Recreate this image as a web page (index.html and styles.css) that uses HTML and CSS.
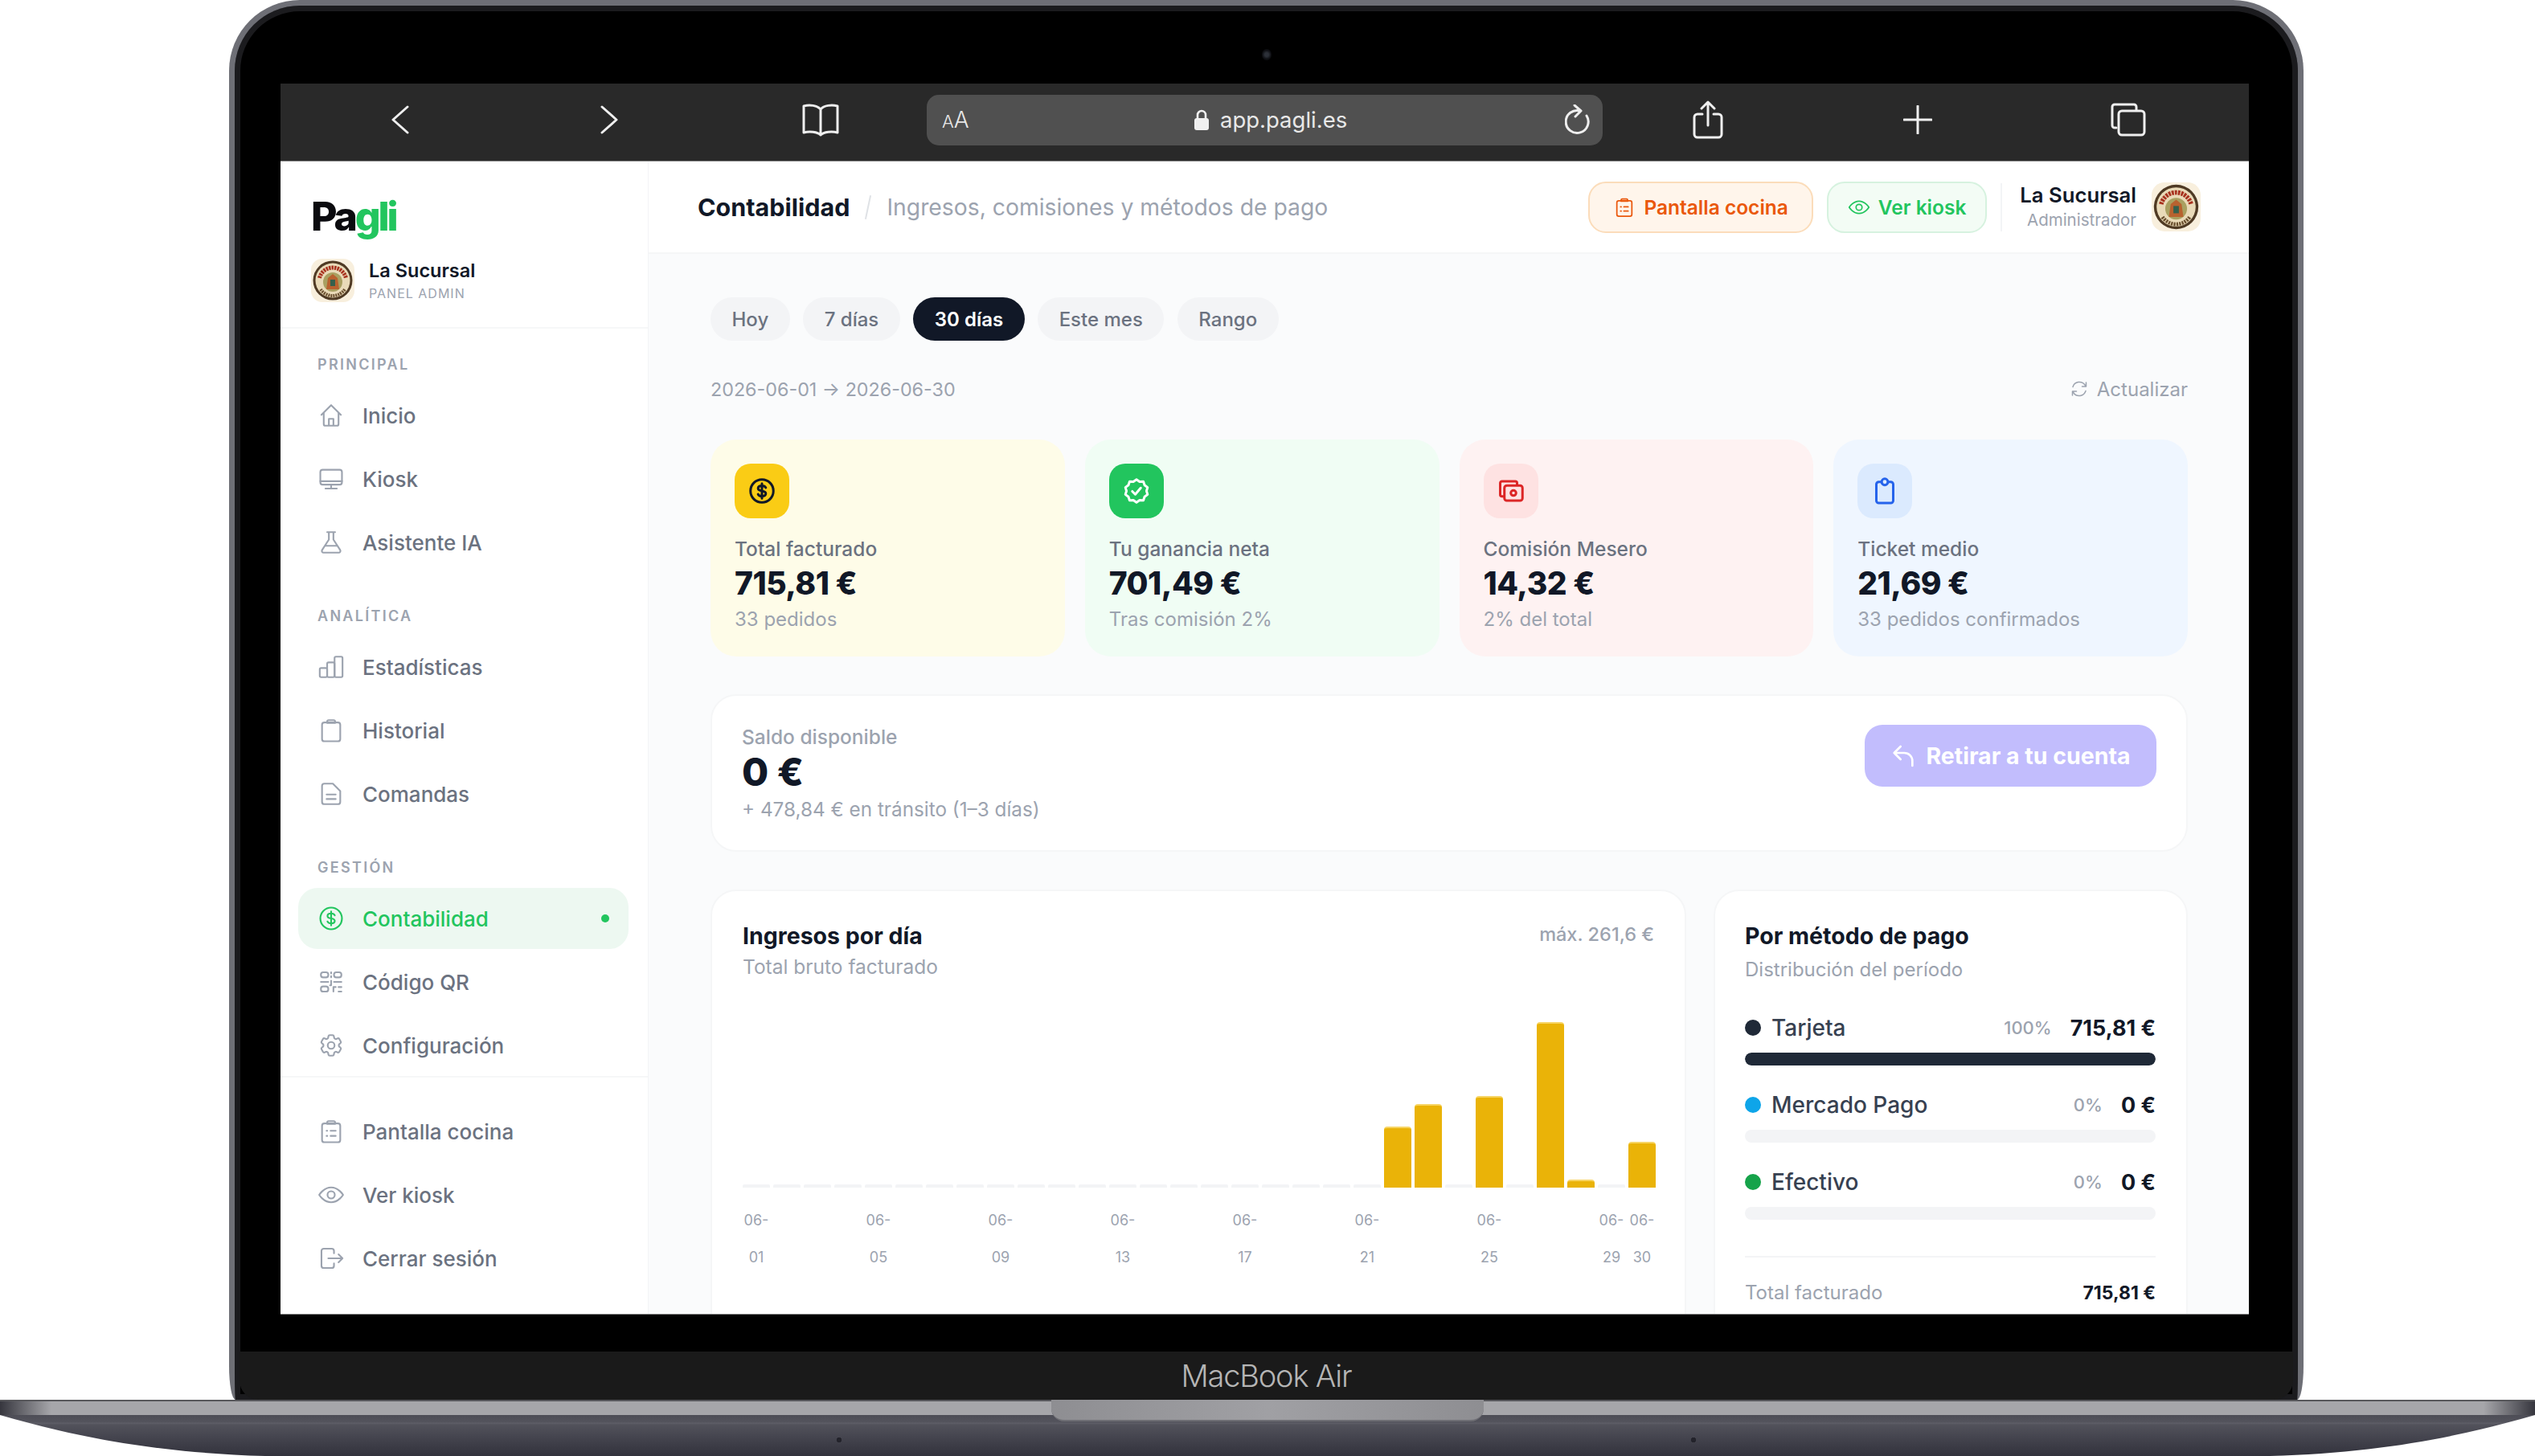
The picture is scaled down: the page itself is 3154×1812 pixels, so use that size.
FILE: index.html
```html
<!DOCTYPE html>
<html lang="es">
<head>
    <meta charset="UTF-8">
    <title>Pagli - Contabilidad</title>
    <link rel="stylesheet" href="styles.css">
</head>
<body>
    <svg class="defs" width="0" height="0">
        <symbol id="i-home" viewBox="0 0 24 24"><path d="M3.5 11.5 12 3l8.500 8.500M5.500 9.500V19.500a1.500 1.500 0 0 0 1.500 1.500h10a1.500 1.500 0 0 0 1.500-1.500V9.500M10 21v-6h4v6"/></symbol>
        <symbol id="i-kiosk" viewBox="0 0 24 24"><rect x="2.500" y="4" width="19" height="13" rx="2"/><path d="M2.500 14h19M12 17v3.500M7 20.500h10"/></symbol>
        <symbol id="i-beaker" viewBox="0 0 24 24"><path d="M8.500 3h7M10 3v6.500L4 18.800A1.500 1.500 0 0 0 5.300 21h13.400a1.500 1.500 0 0 0 1.300-2.200L14 9.500V3M7 15h10"/></symbol>
        <symbol id="i-chart" viewBox="0 0 24 24"><rect x="2" y="13" width="6.500" height="8" rx="1.200"/><rect x="8.500" y="8" width="6.500" height="13" rx="1.200"/><rect x="15" y="3" width="7" height="18" rx="1.200"/></symbol>
        <symbol id="i-clip" viewBox="0 0 24 24"><rect x="4" y="5" width="16" height="16.500" rx="2"/><path d="M8.500 5.500V4.300A1.300 1.300 0 0 1 9.800 3h4.400a1.300 1.300 0 0 1 1.300 1.300v1.200z"/></symbol>
        <symbol id="i-doc" viewBox="0 0 24 24"><path d="M6 3h7.500L20 9.500V19a2 2 0 0 1-2 2H6a2 2 0 0 1-2-2V5a2 2 0 0 1 2-2zM8 12.500h8M8 16.500h8"/></symbol>
        <symbol id="i-dollar" viewBox="0 0 24 24"><circle cx="12" cy="12" r="9.500"/><path d="M15.200 9.300c-.5-1.100-1.700-1.700-3.200-1.700-1.900 0-3.200.9-3.200 2.200s1.300 1.900 3.200 2.200 3.200.9 3.200 2.200-1.300 2.200-3.200 2.200c-1.500 0-2.700-.6-3.200-1.700M12 5.800v12.400"/></symbol>
        <symbol id="i-qr" viewBox="0 0 24 24"><rect x="3" y="3.500" width="6.500" height="4.500" rx="2"/><rect x="14.500" y="3.500" width="6.500" height="4.500" rx="2"/><rect x="3" y="16" width="6.500" height="4.500" rx="2"/><path d="M12 3.500v1M12 7v1M3 12h6.500M12 11v4h-1M14.500 12H21M14 20.500v-4h2M18.500 16.500H21M18.500 20.500H21"/></symbol>
        <symbol id="i-cog" viewBox="0 0 24 24"><path d="M9.594 3.940c.09-.542.56-.94 1.110-.94h2.593c.55 0 1.020.398 1.110.94l.213 1.281c.063.374.313.686.645.870.074.04.147.083.22.127.325.196.72.257 1.075.124l1.217-.456a1.125 1.125 0 0 1 1.370.490l1.296 2.247a1.125 1.125 0 0 1-.26 1.431l-1.003.827c-.293.241-.438.613-.43.992a7.723 7.723 0 0 1 0 .255c-.008.378.137.75.43.991l1.004.827c.424.35.534.955.26 1.430l-1.298 2.247a1.125 1.125 0 0 1-1.369.491l-1.217-.456c-.355-.133-.75-.072-1.076.124a6.470 6.470 0 0 1-.22.128c-.331.183-.581.495-.644.869l-.213 1.281c-.09.543-.56.94-1.110.94h-2.594c-.55 0-1.019-.398-1.110-.94l-.213-1.281c-.062-.374-.312-.686-.644-.87a6.520 6.520 0 0 1-.22-.127c-.325-.196-.72-.257-1.076-.124l-1.217.456a1.125 1.125 0 0 1-1.369-.49l-1.297-2.247a1.125 1.125 0 0 1 .26-1.431l1.004-.827c.292-.24.437-.613.43-.991a6.932 6.932 0 0 1 0-.255c.007-.38-.138-.751-.43-.992l-1.004-.827a1.125 1.125 0 0 1-.26-1.430l1.297-2.247a1.125 1.125 0 0 1 1.370-.491l1.216.456c.356.133.751.072 1.076-.124.072-.044.146-.086.22-.128.332-.183.582-.495.644-.869z"/><circle cx="12" cy="12" r="3"/></symbol>
        <symbol id="i-list" viewBox="0 0 24 24"><rect x="4" y="5" width="16" height="16.500" rx="2"/><path d="M8.500 5.500V4.300A1.300 1.300 0 0 1 9.800 3h4.400a1.300 1.300 0 0 1 1.300 1.300v1.200zM8 11.500h.6M8 16h.6M11.500 11.500H16M11.500 16H16"/></symbol>
        <symbol id="i-eye" viewBox="0 0 24 24"><path d="M1.500 12S5.500 5.500 12 5.500 22.500 12 22.500 12 18.500 18.500 12 18.500 1.500 12 1.500 12z"/><circle cx="12" cy="12" r="3.200"/></symbol>
        <symbol id="i-logout" viewBox="0 0 24 24"><path d="M14.500 7.500V5.500a2 2 0 0 0-2-2H5.500a2 2 0 0 0-2 2v13a2 2 0 0 0 2 2h7a2 2 0 0 0 2-2v-2M9.500 12h12.500M18.500 8.500 22 12l-3.500 3.500"/></symbol>
        <symbol id="i-refresh" viewBox="0 0 24 24"><path d="M4 9.500A8.500 8.500 0 0 1 19 7l1.500 2M20 14.500A8.500 8.500 0 0 1 5 17l-1.500-2M20.500 4v5h-5M3.500 20v-5h5"/></symbol>
        <symbol id="i-reply" viewBox="0 0 24 24"><path d="M9.500 15 3.500 9l6-6M3.500 9h9.500a7.500 7.500 0 0 1 7.500 7.500V21"/></symbol>
        <symbol id="i-badge" viewBox="0 0 24 24"><path d="M12 2.500l2.600 1.800 3.100-.1 1 3 2.500 1.900-.9 2.900.9 2.900-2.500 1.900-1 3-3.100-.1L12 21.500l-2.600-1.800-3.100.1-1-3-2.500-1.900.9-2.900-.9-2.900 2.500-1.900 1-3 3.100.1z"/><path d="M8.500 12.300l2.500 2.500 4.500-5.300"/></symbol>
        <symbol id="i-notes" viewBox="0 0 24 24"><path d="M6 16.500H4.500a1.500 1.500 0 0 1-1.500-1.500V5.500A1.500 1.500 0 0 1 4.500 4h11A1.500 1.500 0 0 1 17 5.500V7"/><rect x="6.500" y="7.500" width="15" height="12.500" rx="2"/><circle cx="14" cy="13.700" r="2.200"/></symbol>
        <symbol id="i-tag" viewBox="0 0 24 24"><rect x="5" y="4.500" width="14" height="17.500" rx="2"/><circle cx="12" cy="4.500" r="2.600" class="tag-hole"/></symbol>
        <symbol id="i-avatar" viewBox="0 0 54 54">
            <rect width="54" height="54" rx="14" fill="#f8efdd"/>
            <circle cx="27" cy="27" r="24.500" fill="#4f3a24"/>
            <circle cx="27" cy="27" r="21.500" fill="#e9dab8"/>
            <path d="M10.500 24a17 17 0 0 1 33 0" fill="none" stroke="#a8321f" stroke-width="5" stroke-dasharray="2.500 1"/>
            <circle cx="27" cy="29" r="12" fill="#a9a061"/>
            <path d="M19 38l2-14 6-5 6 5 2 14z" fill="#b8622f"/>
            <rect x="24" y="26" width="6" height="8" fill="#35604c"/>
            <path d="M12 38a18 18 0 0 0 30 0" fill="none" stroke="#6b5030" stroke-width="4" stroke-dasharray="2 1"/>
        </symbol>
    </svg>

    <div class="lid">
        <div class="camera"></div>
        <div class="screen">
            <div class="toolbar">
                <svg class="tb-icon" width="24" height="36" viewBox="0 0 24 36"><path d="M21 2 3 18l18 16"/></svg>
                <svg class="tb-icon" width="24" height="36" viewBox="0 0 24 36"><path d="M3 2l18 16L3 34"/></svg>
                <svg class="tb-icon" width="48" height="42" viewBox="0 0 48 42"><path d="M24 8C20 3 10 2 3 4v33c7-2 17-1 21 3 4-4 14-5 21-3V4c-7-2-17-1-21 4zv32"/></svg>
                <div class="urlbar">
                    <span class="aa"><small>A</small>A</span>
                    <span class="url">
                        <svg width="18" height="26" viewBox="0 0 18 26"><rect y="11" width="18" height="15" rx="3" fill="#f0f0f0"/><path d="M4 12V7a5 5 0 0 1 10 0v5" fill="none" stroke="#f0f0f0" stroke-width="2.600"/></svg>
                        app.pagli.es
                    </span>
                    <svg class="tb-icon" width="34" height="38" viewBox="0 0 34 38"><path d="M27 14a14 14 0 1 1-8-6M12 1l8 7-7 7"/></svg>
                </div>
                <svg class="tb-icon" width="38" height="48" viewBox="0 0 38 48"><path d="M12 17H6a4 4 0 0 0-4 4v21a4 4 0 0 0 4 4h26a4 4 0 0 0 4-4V21a4 4 0 0 0-4-4h-6M19 31V2M11 10l8-8 8 8"/></svg>
                <svg class="tb-icon" width="36" height="36" viewBox="0 0 36 36"><path d="M18 1v34M1 18h34"/></svg>
                <svg class="tb-icon" width="44" height="42" viewBox="0 0 44 42"><path d="M7 31H5a3 3 0 0 1-3-3V5a3 3 0 0 1 3-3h24a3 3 0 0 1 3 3v4"/><rect x="10" y="10" width="32" height="30" rx="4"/></svg>
            </div>

            <div class="app">
                <aside class="sidebar">
                    <div class="brand">
                        <div class="logo">Pa<span>gli</span></div>
                        <div class="brand-row">
                            <svg class="avatar"><use href="#i-avatar"/></svg>
                            <div>
                                <div class="brand-name">La Sucursal</div>
                                <div class="brand-sub">PANEL ADMIN</div>
                            </div>
                        </div>
                    </div>

                    <nav class="nav">
                        <div class="nav-label">PRINCIPAL</div>
                        <a class="nav-item"><svg class="ico"><use href="#i-home"/></svg>Inicio</a>
                        <a class="nav-item"><svg class="ico"><use href="#i-kiosk"/></svg>Kiosk</a>
                        <a class="nav-item"><svg class="ico"><use href="#i-beaker"/></svg>Asistente IA</a>

                        <div class="nav-label">ANALÍTICA</div>
                        <a class="nav-item"><svg class="ico"><use href="#i-chart"/></svg>Estadísticas</a>
                        <a class="nav-item"><svg class="ico"><use href="#i-clip"/></svg>Historial</a>
                        <a class="nav-item"><svg class="ico"><use href="#i-doc"/></svg>Comandas</a>

                        <div class="nav-label">GESTIÓN</div>
                        <a class="nav-item active"><svg class="ico"><use href="#i-dollar"/></svg>Contabilidad<i class="nav-dot"></i></a>
                        <a class="nav-item"><svg class="ico"><use href="#i-qr"/></svg>Código QR</a>
                        <a class="nav-item"><svg class="ico"><use href="#i-cog"/></svg>Configuración</a>
                    </nav>

                    <div class="nav nav-bottom">
                        <a class="nav-item"><svg class="ico"><use href="#i-list"/></svg>Pantalla cocina</a>
                        <a class="nav-item"><svg class="ico"><use href="#i-eye"/></svg>Ver kiosk</a>
                        <a class="nav-item"><svg class="ico"><use href="#i-logout"/></svg>Cerrar sesión</a>
                    </div>
                </aside>

                <main class="main">
                    <header class="topbar">
                        <div class="crumbs">
                            <strong>Contabilidad</strong>
                            <i class="crumb-sep"></i>
                            <span>Ingresos, comisiones y métodos de pago</span>
                        </div>
                        <div class="top-actions">
                            <a class="top-btn orange"><svg class="ico"><use href="#i-list"/></svg>Pantalla cocina</a>
                            <a class="top-btn green"><svg class="ico"><use href="#i-eye"/></svg>Ver kiosk</a>
                            <div class="top-user">
                                <div class="user-name">La Sucursal</div>
                                <div class="user-role">Administrador</div>
                            </div>
                            <svg class="avatar avatar-lg"><use href="#i-avatar"/></svg>
                        </div>
                    </header>

                    <div class="content">
                        <div class="pills">
                            <span class="pill">Hoy</span>
                            <span class="pill">7 días</span>
                            <span class="pill on">30 días</span>
                            <span class="pill">Este mes</span>
                            <span class="pill">Rango</span>
                        </div>

                        <div class="date-row">
                            <span>2026-06-01 → 2026-06-30</span>
                            <span class="refresh"><svg class="ico"><use href="#i-refresh"/></svg>Actualizar</span>
                        </div>

                        <div class="kpis">
                            <div class="kpi yellow">
                                <div class="kpi-icon"><svg class="ico"><use href="#i-dollar"/></svg></div>
                                <div class="kpi-label">Total facturado</div>
                                <div class="kpi-value">715,81 €</div>
                                <div class="kpi-sub">33 pedidos</div>
                            </div>
                            <div class="kpi mint">
                                <div class="kpi-icon"><svg class="ico"><use href="#i-badge"/></svg></div>
                                <div class="kpi-label">Tu ganancia neta</div>
                                <div class="kpi-value">701,49 €</div>
                                <div class="kpi-sub">Tras comisión 2%</div>
                            </div>
                            <div class="kpi rose">
                                <div class="kpi-icon"><svg class="ico"><use href="#i-notes"/></svg></div>
                                <div class="kpi-label">Comisión Mesero</div>
                                <div class="kpi-value">14,32 €</div>
                                <div class="kpi-sub">2% del total</div>
                            </div>
                            <div class="kpi sky">
                                <div class="kpi-icon"><svg class="ico"><use href="#i-tag"/></svg></div>
                                <div class="kpi-label">Ticket medio</div>
                                <div class="kpi-value">21,69 €</div>
                                <div class="kpi-sub">33 pedidos confirmados</div>
                            </div>
                        </div>

                        <div class="card saldo">
                            <div>
                                <div class="saldo-label">Saldo disponible</div>
                                <div class="saldo-value">0 €</div>
                                <div class="saldo-sub">+ 478,84 € en tránsito (1–3 días)</div>
                            </div>
                            <a class="withdraw"><svg class="ico"><use href="#i-reply"/></svg>Retirar a tu cuenta</a>
                        </div>

                        <div class="charts">
                            <div class="card chart-card">
                                <div class="card-head">
                                    <div>
                                        <div class="card-title">Ingresos por día</div>
                                        <div class="card-sub">Total bruto facturado</div>
                                    </div>
                                    <div class="card-max">máx. 261,6 €</div>
                                </div>
                                <div class="bars">
                                    <i></i><i></i><i></i><i></i><i></i><i></i><i></i><i></i><i></i><i></i>
                                    <i></i><i></i><i></i><i></i><i></i><i></i><i></i><i></i><i></i><i></i>
                                    <i></i>
                                    <i class="bar" style="height:76px"></i>
                                    <i class="bar" style="height:104px"></i>
                                    <i></i>
                                    <i class="bar" style="height:114px"></i>
                                    <i></i>
                                    <i class="bar" style="height:206px"></i>
                                    <i class="bar" style="height:10px"></i>
                                    <i></i>
                                    <i class="bar" style="height:57px"></i>
                                </div>
                                <div class="bar-labels">
                                    <span>06-01</span><span></span><span></span><span></span>
                                    <span>06-05</span><span></span><span></span><span></span>
                                    <span>06-09</span><span></span><span></span><span></span>
                                    <span>06-13</span><span></span><span></span><span></span>
                                    <span>06-17</span><span></span><span></span><span></span>
                                    <span>06-21</span><span></span><span></span><span></span>
                                    <span>06-25</span><span></span><span></span><span></span>
                                    <span>06-29</span><span>06-30</span>
                                </div>
                            </div>

                            <div class="card method-card">
                                <div class="card-title">Por método de pago</div>
                                <div class="card-sub method-sub">Distribución del período</div>

                                <div class="method-row">
                                    <i class="dot navy"></i><span class="method-name">Tarjeta</span>
                                    <span class="method-pct">100%</span><b class="method-val">715,81 €</b>
                                </div>
                                <div class="track"><div class="fill" style="width:100%"></div></div>

                                <div class="method-row">
                                    <i class="dot blue"></i><span class="method-name">Mercado Pago</span>
                                    <span class="method-pct">0%</span><b class="method-val">0 €</b>
                                </div>
                                <div class="track"></div>

                                <div class="method-row">
                                    <i class="dot grn"></i><span class="method-name">Efectivo</span>
                                    <span class="method-pct">0%</span><b class="method-val">0 €</b>
                                </div>
                                <div class="track"></div>

                                <div class="method-total">
                                    <span>Total facturado</span><b>715,81 €</b>
                                </div>
                            </div>
                        </div>
                    </div>
                </main>
            </div>
        </div>
        <div class="chin">MacBook Air</div>
    </div>

    <div class="base"><div class="notch"></div></div>
</body>
</html>
```

FILE: styles.css
```css
:root {
    --ink: #111827;
    --muted: #9ca3af;
    --text: #6b7280;
    --line: #f3f4f6;
    --green: #22c55e;
}

* {
    margin: 0;
    padding: 0;
    box-sizing: border-box;
}

html, body {
    width: 3154px;
    height: 1812px;
    overflow: hidden;
    background: #fff;
}

body {
    font-family: Inter, "Noto Sans", sans-serif;
    color: var(--ink);
}

.defs {
    position: absolute;
}

i {
    font-style: normal;
}

/* Laptop */
.lid {
    width: 2581px;
    height: 1742px;
    margin-left: 285px;
    background: #000;
    border: 7px solid #6e6f76;
    border-bottom: 0;
    border-radius: 88px 88px 8px 8px / 88px 88px 42px 42px;
    box-shadow: inset 0 0 0 7px #1b1b1e;
    display: flex;
    flex-direction: column;
}

.camera {
    width: 12px;
    height: 14px;
    margin: 54px auto 29px;
    border-radius: 50%;
    background: radial-gradient(circle, #2c3038 0 25%, #0d0e12 60%);
}

.screen {
    width: 2449px;
    height: 1532px;
    margin-left: 57px;
    background: #fff;
    border-bottom: 1px solid #8d8d8d;
    overflow: hidden;
    display: flex;
    flex-direction: column;
}

.chin {
    height: 60px;
    margin: 46px 6px 0;
    background: #1a1a1a;
    border-radius: 0 0 24px 24px;
    color: #b5b5b5;
    font-size: 38px;
    font-weight: 300;
    letter-spacing: -1.200px;
    display: flex;
    align-items: center;
    justify-content: center;
}

.base {
    width: 3154px;
    height: 70px;
    display: flex;
    justify-content: center;
    clip-path: path('M0 0H3154V19C3064 45 2964 66 2824 70H330C190 66 90 45 0 19Z');
    background:
        radial-gradient(circle 5px at 1044px 50px, #23232b 60%, transparent 70%),
        radial-gradient(circle 5px at 2107px 50px, #23232b 60%, transparent 70%),
        linear-gradient(#58585c 0 2px, transparent 2px) top / 100% 2px no-repeat,
        linear-gradient(90deg, #36363e 0, #a6a6aa 64px, #a6a6aa 3090px, #36363e 3154px) top / 100% 19px no-repeat,
        linear-gradient(#4d4d56 19px, #54545d 28px, #5f5f68 29px, #52525b 31px, #45454f 46px, #32323c 70px);
}

.notch {
    width: 538px;
    height: 27px;
    background: linear-gradient(90deg, #8e8e92, #a0a0a4 50%, #8e8e92);
    border-bottom: 2px solid #6e6e74;
    border-radius: 0 0 16px 16px;
}

/* Browser bar */
.toolbar {
    height: 97px;
    flex: none;
    background: #292929;
    border-bottom: 1px solid #8a8a8a;
    padding: 0 0 6px 19px;
    display: grid;
    grid-template-columns: 260px 260px 265px 841px 262px 260px 264px;
    justify-items: center;
    align-items: center;
}

.tb-icon {
    fill: none;
    stroke: #efefef;
    stroke-width: 3;
    stroke-linecap: round;
    stroke-linejoin: round;
}

.urlbar {
    width: 100%;
    height: 63px;
    background: #505050;
    border-radius: 15px;
    padding: 0 13px 0 19px;
    display: grid;
    grid-template-columns: 1.03fr auto 1fr;
    align-items: center;
    color: #e8e8e8;
}

.urlbar > svg {
    justify-self: end;
}

.aa {
    font-size: 28px;
    font-weight: 300;
}

.aa small {
    font-size: 22px;
}

.url {
    font-size: 27.500px;
    display: flex;
    align-items: center;
    gap: 14px;
}

/* App shell */
.app {
    flex: 1;
    min-height: 0;
    display: grid;
    grid-template-columns: 458px 1fr;
}

.ico {
    width: 34px;
    height: 34px;
    flex: none;
    fill: none;
    stroke: currentColor;
    stroke-width: 1.500;
    stroke-linecap: round;
    stroke-linejoin: round;
}

.avatar {
    width: 54px;
    height: 54px;
    flex: none;
}

.avatar-lg {
    width: 61px;
    height: 61px;
}

/* Sidebar */
.sidebar {
    border-right: 1px solid var(--line);
    overflow: hidden;
}

.brand {
    height: 208px;
    padding: 43px 0 0 38px;
    border-bottom: 2px solid #f6f7f8;
}

.logo {
    font-size: 50px;
    line-height: 50px;
    font-weight: 800;
    letter-spacing: -3.200px;
    color: #0b0b0f;
}

.logo span {
    color: var(--green);
}

.brand-row {
    display: flex;
    align-items: center;
    gap: 18px;
    margin-top: 28px;
}

.brand-name {
    font-size: 23.500px;
    font-weight: 600;
    line-height: 28px;
}

.brand-sub {
    font-size: 16px;
    line-height: 20px;
    margin-top: 4px;
    letter-spacing: 1px;
    color: var(--muted);
}

.nav {
    padding: 0 24px 0 22px;
    display: flex;
    flex-direction: column;
    gap: 3px;
}

.nav-label {
    height: 20px;
    line-height: 20px;
    margin: 41px 0 12px 24px;
    font-size: 18px;
    font-weight: 600;
    letter-spacing: 2.300px;
    color: var(--muted);
}

.nav-label:first-child {
    margin-top: 35px;
}

.nav-item {
    height: 76px;
    padding: 0 22px 0 24px;
    border-radius: 24px;
    display: flex;
    align-items: center;
    gap: 22px;
    font-size: 26px;
    font-weight: 500;
    color: var(--text);
}

.nav-item .ico {
    color: var(--muted);
}

.nav-item.active,
.nav-item.active .ico {
    color: var(--green);
}

.nav-item.active {
    background: #edf8f1;
}

.nav-dot {
    width: 10px;
    height: 10px;
    margin-left: auto;
    margin-right: 2px;
    border-radius: 50%;
    background: var(--green);
}

.nav-bottom {
    padding-top: 29px;
    border-top: 2px solid #f6f7f8;
}

/* Top bar */
.main {
    min-width: 0;
    min-height: 0;
    display: flex;
    flex-direction: column;
    background: #fafbfc;
}

.topbar {
    height: 115px;
    flex: none;
    background: #fff;
    border-bottom: 2px solid #f5f6f7;
    padding: 0 60px 0 61px;
    display: flex;
    align-items: center;
    justify-content: space-between;
}

.crumbs {
    display: flex;
    align-items: center;
    gap: 22px;
    font-size: 28.300px;
    color: var(--muted);
}

.crumbs strong {
    font-size: 30.500px;
    font-weight: 700;
    color: var(--ink);
}

.crumb-sep {
    width: 2px;
    height: 30px;
    background: #dfe2e6;
    transform: rotate(12deg);
}

.top-actions {
    display: flex;
    align-items: center;
}

.top-btn {
    height: 64px;
    padding: 0 29px;
    margin-right: 17px;
    border: 2px solid;
    border-radius: 22px;
    display: flex;
    align-items: center;
    gap: 10px;
    font-size: 24.500px;
    font-weight: 600;
}

.top-btn .ico {
    width: 28px;
    height: 28px;
}

.top-btn.orange {
    background: #fff5eb;
    border-color: #fbdcba;
    color: #ea580c;
}

.top-btn.green {
    padding: 0 24px;
    background: #f3fcf5;
    border-color: #d6f2df;
    color: var(--green);
}

.top-user {
    height: 60px;
    margin-right: 19px;
    padding-left: 22px;
    border-left: 2px solid #f3f4f6;
    text-align: right;
}

.user-name {
    font-size: 25.700px;
    font-weight: 600;
    line-height: 30px;
}

.user-role {
    font-size: 20.500px;
    line-height: 24px;
    margin-top: 4px;
    color: var(--muted);
}

/* Content */
.content {
    flex: 1;
    min-height: 0;
    overflow: hidden;
    padding: 54px 76px 0 77px;
    display: flex;
    flex-direction: column;
    gap: 47px;
}

.content > * {
    flex: none;
}

.pills {
    display: flex;
    gap: 16.500px;
}

.pill {
    height: 54px;
    padding: 0 26.500px;
    border-radius: 27px;
    background: #f3f4f6;
    color: var(--text);
    font-size: 24px;
    font-weight: 500;
    display: flex;
    align-items: center;
}

.pill.on {
    background: #111827;
    color: #fff;
    font-weight: 600;
}

.date-row {
    height: 26px;
    margin-bottom: 3px;
    display: flex;
    align-items: center;
    justify-content: space-between;
    font-size: 23.300px;
    color: var(--muted);
}

.refresh {
    display: flex;
    align-items: center;
    gap: 10px;
    font-size: 24px;
}

.refresh .ico {
    width: 24px;
    height: 24px;
}

.kpis {
    display: grid;
    grid-template-columns: repeat(4, 1fr);
    gap: 25px;
}

.kpi {
    height: 270px;
    padding: 30px;
    border-radius: 32px;
}

.kpi-icon {
    width: 68px;
    height: 68px;
    border-radius: 20px;
    display: flex;
    align-items: center;
    justify-content: center;
}

.kpi-icon .ico {
    width: 36px;
    height: 36px;
    stroke-width: 2;
}

.kpi.yellow { background: #fefce8; }
.kpi.mint { background: #f0fdf4; }
.kpi.rose { background: #fef2f2; }
.kpi.sky { background: #eff6ff; }

.kpi.yellow .kpi-icon { background: #facc15; color: #111827; }
.kpi.mint .kpi-icon { background: var(--green); color: #fff; }
.kpi.rose .kpi-icon { background: #fee2e2; color: #dc2626; }
.kpi.sky .kpi-icon { background: #dbeafe; color: #2563eb; }

.tag-hole {
    fill: #dbeafe;
}

.kpi-label {
    margin-top: 23px;
    font-size: 24.500px;
    line-height: 30px;
    font-weight: 500;
    color: var(--text);
}

.kpi-value {
    margin-top: 6px;
    font-size: 39px;
    line-height: 44px;
    font-weight: 800;
    letter-spacing: -.5px;
}

.kpi-sub {
    margin-top: 8px;
    font-size: 24px;
    line-height: 30px;
    color: var(--muted);
}

.card {
    background: #fff;
    border: 2px solid #f5f6f7;
    border-radius: 32px;
}

.saldo {
    height: 196px;
    padding: 0 37px;
    display: flex;
    align-items: center;
    justify-content: space-between;
}

.saldo-label {
    font-size: 24.500px;
    line-height: 30px;
    font-weight: 500;
    color: var(--muted);
}

.saldo-value {
    margin-top: 2px;
    font-size: 48px;
    line-height: 54px;
    font-weight: 800;
}

.saldo-sub {
    margin-top: 3px;
    font-size: 24.300px;
    line-height: 32px;
    color: var(--muted);
}

.withdraw {
    width: 363px;
    height: 77px;
    margin-bottom: 43px;
    border-radius: 22px;
    background: #c2bdfd;
    color: #fff;
    font-size: 28.500px;
    font-weight: 700;
    display: flex;
    align-items: center;
    justify-content: center;
    gap: 12px;
}

.withdraw .ico {
    width: 32px;
    height: 32px;
    stroke-width: 2;
}

.charts {
    display: grid;
    grid-template-columns: 1214px 590px;
    justify-content: space-between;
}

.chart-card,
.method-card {
    height: 620px;
    padding: 40px 38px 0;
}

.card-head {
    display: flex;
    justify-content: space-between;
}

.card-title {
    font-size: 28.500px;
    line-height: 32px;
    font-weight: 700;
}

.card-sub {
    margin-top: 8px;
    font-size: 24.500px;
    line-height: 28px;
    color: var(--muted);
}

.card-max {
    font-size: 23.500px;
    line-height: 28px;
    font-weight: 500;
    color: var(--muted);
}

.bars {
    height: 261px;
    display: grid;
    grid-template-columns: repeat(30, 34px);
    gap: 4px;
    align-items: end;
}

.bars i {
    height: 4px;
    border-radius: 2px 2px 0 0;
    background: var(--line);
}

.bars .bar {
    background: #eab308;
    border-top: 2px solid #f7d565;
    border-radius: 4px 4px 0 0;
}

.bar-labels {
    margin-top: 18px;
    display: grid;
    grid-template-columns: repeat(30, 34px);
    column-gap: 4px;
    font-size: 18px;
    line-height: 46px;
    text-align: center;
    color: var(--muted);
}

.method-card {
    padding-left: 37px;
}

.method-sub {
    margin-top: 12px;
    font-size: 24px;
}

.method-row {
    margin-top: 31px;
    height: 36px;
    display: flex;
    align-items: center;
    font-size: 28px;
    font-weight: 500;
    color: #374151;
}

.method-sub + .method-row {
    margin-top: 40px;
}

.dot {
    width: 20px;
    height: 20px;
    margin-right: 13px;
    border-radius: 50%;
}

.dot.navy { background: #1f2937; }
.dot.blue { background: #0ea5e9; }
.dot.grn { background: #16a34a; }

.method-pct {
    margin-left: auto;
    font-size: 22px;
    color: var(--muted);
}

.method-val {
    margin-left: 23px;
    font-size: 27px;
    font-weight: 700;
    color: var(--ink);
}

.track {
    height: 16px;
    margin-top: 13px;
    border-radius: 8px;
    background: var(--line);
    overflow: hidden;
}

.fill {
    height: 100%;
    background: #1f2937;
    border-radius: 8px;
}

.method-total {
    margin-top: 45px;
    padding-top: 28px;
    border-top: 2px solid var(--line);
    display: flex;
    justify-content: space-between;
    font-size: 24px;
    line-height: 32px;
    color: var(--muted);
}

.method-total b {
    font-size: 23px;
    font-weight: 700;
    color: var(--ink);
}
```
